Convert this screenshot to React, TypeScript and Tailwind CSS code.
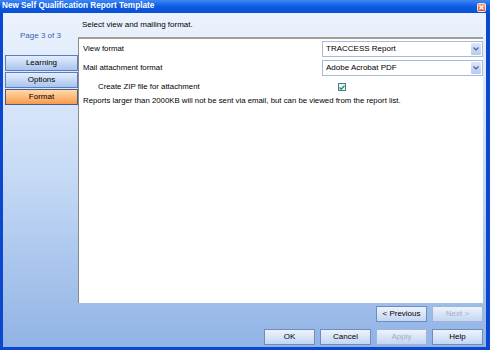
import React from 'react'

const font = { fontFamily: '"Liberation Sans", Arial, sans-serif' }

function NavButton({ label, active }: { label: string; active?: boolean }) {
  return (
    <div
      className={
        'h-[16px] flex items-center justify-center text-[8px] text-black border ' +
        (active
          ? 'border-[#4a5a8a] bg-gradient-to-b from-[#ffd9a8] to-[#f79a4a]'
          : 'border-[#5a7cc0] bg-gradient-to-b from-[#e4eefb] to-[#a9c4ee]')
      }
    >
      {label}
    </div>
  )
}

function Btn({ label, disabled }: { label: string; disabled?: boolean }) {
  return (
    <div
      className={
        'w-[51px] h-[16px] flex items-center justify-center text-[8px] border bg-gradient-to-b from-[#edf3fc] to-[#c4d6f2] ' +
        (disabled ? 'border-[#9fb4d8] text-[#a4aec0]' : 'border-[#6f8cc0] text-black')
      }
    >
      {label}
    </div>
  )
}

function Select({ value }: { value: string }) {
  return (
    <div className="w-[161px] h-[16px] border border-[#a7bad6] bg-white flex items-center justify-between pl-[3px] pr-[1px]">
      <span className="text-[8px] text-black">{value}</span>
      <div className="w-[10px] h-[12px] bg-gradient-to-b from-[#dbe6fb] to-[#b6caf2] rounded-[1px] flex items-center justify-center">
        <svg width="6" height="4" viewBox="0 0 6 4">
          <path d="M0.5 0.5 L3 3 L5.5 0.5" fill="none" stroke="#4d6185" strokeWidth="1.2" />
        </svg>
      </div>
    </div>
  )
}

export default function App() {
  return (
    <div className="w-[490px] h-[350px] flex flex-col bg-[#0b47cf] overflow-hidden" style={font}>
      {/* title bar */}
      <div className="h-[13px] flex items-center justify-between pl-[2px] pr-[4px] bg-gradient-to-b from-[#3d86f3] via-[#0b5ce2] to-[#0a50d6]">
        <span className="text-[8.2px] font-bold text-white leading-none">New Self Qualification Report Template</span>
        <div className="w-[9px] h-[9px] mt-[2px] rounded-[2px] border border-white/80 bg-gradient-to-b from-[#f4a27a] to-[#dc4a22] flex items-center justify-center">
          <svg width="5" height="5" viewBox="0 0 5 5">
            <path d="M0.5 0.5 L4.5 4.5 M4.5 0.5 L0.5 4.5" stroke="white" strokeWidth="1.3" />
          </svg>
        </div>
      </div>

      {/* body */}
      <div className="flex-1 flex flex-col ml-[3px] mr-[4px] mb-[3px] bg-gradient-to-b from-[#edf3fd] via-[#c4d9f5] to-[#91b3e5]">
        <div className="flex-1 flex">
          {/* left column */}
          <div className="w-[75px] flex flex-col">
            <div className="h-[42px] flex items-center justify-center pt-[4px] text-[8px] text-[#3a62b5]">Page 3 of 3</div>
            <div className="flex flex-col gap-[1px] ml-[2px]">
              <NavButton label="Learning" />
              <NavButton label="Options" />
              <NavButton label="Format" active />
            </div>
          </div>

          {/* right column */}
          <div className="flex-1 flex flex-col pr-[3px]">
            <div className="h-[24px] flex items-center pl-[4px] text-[8px] text-black">Select view and mailing format.</div>
            <div className="flex-1 bg-white border-t-2 border-l border-t-[#a39f95] border-l-[#8a8a8a] flex flex-col pl-[4px] text-[7.8px] text-black">
              <div className="h-[19px] flex items-center justify-between">
                <span>View format</span>
                <Select value="TRACCESS Report" />
              </div>
              <div className="h-[20px] flex items-center justify-between">
                <span>Mail attachment format</span>
                <Select value="Adobe Acrobat PDF" />
              </div>
              <div className="h-[18px] flex items-center">
                <span className="pl-[15px] w-[255px]">Create ZIP file for attachment</span>
                <div className="w-[8px] h-[8px] border border-[#4d74a8] bg-[#eef2f6] flex items-center justify-center">
                  <svg width="6" height="5" viewBox="0 0 6 5">
                    <path d="M0.5 2.5 L2.2 4.2 L5.5 0.8" fill="none" stroke="#1fa32a" strokeWidth="1.4" />
                  </svg>
                </div>
              </div>
              <div className="h-[10px] flex items-center">
                Reports larger than 2000KB will not be sent via email, but can be viewed from the report list.
              </div>
            </div>
          </div>
        </div>

        {/* bottom buttons */}
        <div className="flex flex-col items-end pr-[3px] pt-[3px] pb-[2px] gap-[7px]">
          <div className="flex gap-[5px]">
            <Btn label="< Previous" />
            <Btn label="Next >" disabled />
          </div>
          <div className="flex gap-[5px]">
            <Btn label="OK" />
            <Btn label="Cancel" />
            <Btn label="Apply" disabled />
            <Btn label="Help" />
          </div>
        </div>
      </div>
    </div>
  )
}
